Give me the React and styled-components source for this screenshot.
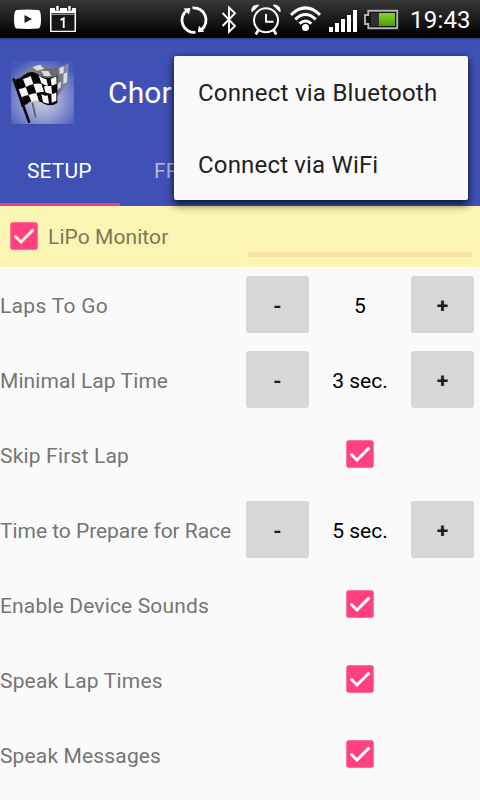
import * as React from "react"
import styled, { createGlobalStyle } from "styled-components"

const GlobalStyle = createGlobalStyle`
  body {
    margin: 0;
    background: #fafafa;
    font-family: Roboto, "Liberation Sans", sans-serif;
  }

  * {
    box-sizing: border-box;
  }
`

const Screen = styled.div`
  position: relative;
  width: 480px;
  height: 800px;
  overflow: hidden;
  background: #fafafa;
`

const StatusBar = styled.div`
  height: 38px;
  display: flex;
  justify-content: space-between;
  padding: 0 8px 0 13px;
  background: linear-gradient(#373735, #1b1b1a 50%, #000 92%);
`

const StatusGroup = styled.div`
  display: flex;

  svg {
    display: block;
    height: 38px;
  }
`

const Clock = styled.div`
  width: 62px;
  color: #fff;
  font-size: 24px;
  line-height: 40px;
  letter-spacing: 0.2px;
  white-space: nowrap;
`

const Header = styled.header`
  height: 168px;
  background: #3f51b5;
  box-shadow: inset 0 3px 3px -2px #303b86;
`

const Toolbar = styled.div`
  height: 109px;
  display: flex;
  align-items: center;
  padding-left: 11px;
  gap: 34px;

  svg {
    display: block;
  }
`

const Title = styled.h1`
  margin: 0;
  color: #fff;
  font-size: 30px;
  font-weight: 400;
  letter-spacing: 0.1px;
`

const Tabs = styled.nav`
  height: 59px;
  display: flex;
`

const Tab = styled.div`
  width: 120px;
  height: 59px;
  padding: 12px 0 0 ${(p) => p.$inset}px;
  line-height: 25px;
  font-size: 21px;
  letter-spacing: 0.1px;
  color: ${(p) => (p.$active ? "#fff" : "#b2b9e1")};
  border-bottom: 3px solid ${(p) => (p.$active ? "#ec407f" : "transparent")};
`

const MonitorBar = styled.div`
  height: 61px;
  display: flex;
  padding: 0 8px 0 10px;
  justify-content: space-between;
  background: #fbf4b3;
`

const MonitorLabel = styled.div`
  display: flex;
  align-items: center;
  gap: 10px;
  font-size: 21px;
  letter-spacing: 0.07px;
  color: #7b7854;

  svg {
    margin-bottom: 2px;
  }
`

const VoltageLine = styled.div`
  width: 224px;
  height: 5px;
  margin-top: 46px;
  background: #fae3ab;
`

const Row = styled.div`
  height: 75px;
  display: grid;
  grid-template-columns: 240px 240px;
  align-items: center;
`

const Label = styled.div`
  font-size: 21px;
  line-height: 25px;
  letter-spacing: ${(p) => p.$spacing}px;
  color: #757575;
  white-space: nowrap;
  padding-top: 3px;
`

const Stepper = styled.div`
  display: flex;
  align-items: center;
  justify-content: space-between;
  padding: 0 6px;
`

const StepButton = styled.button`
  width: 63px;
  height: 57px;
  padding: 3px 0 0;
  border: 0;
  border-radius: 3px;
  background: #d6d7d7;
  color: #1c1c1c;
  font: 700 21px Roboto, "Liberation Sans", sans-serif;
`

const Value = styled.div`
  padding-top: 2px;
  font-size: 21px;
  color: #000;
`

const CheckCell = styled.div`
  display: flex;
  justify-content: center;
  padding-bottom: 1px;
`

const CheckSvg = styled.svg`
  display: block;
  width: 28px;
  height: 28px;
`

const Menu = styled.div`
  position: absolute;
  left: 174px;
  top: 56px;
  width: 294px;
  height: 144px;
  border-radius: 2px;
  background: #fafafa;
  box-shadow: 0 5px 9px rgba(0, 0, 0, 0.6), 0 1px 6px rgba(0, 0, 0, 0.4);
`

const MenuItem = styled.div`
  height: 72px;
  padding: 1px 0 0 24px;
  line-height: 72px;
  font-size: 24px;
  letter-spacing: ${(p) => p.$spacing}px;
  color: #212121;
  white-space: nowrap;
`

const Check = ({ mark = "#fff" }) => (
  <CheckSvg viewBox="0 0 28 28">
    <rect x="0.3" y="0.3" width="27.4" height="27.4" rx="2.5" fill="#ff4081" />
    <path d="M4.7 13.8 L11 20 L23.4 7.6" fill="none" stroke={mark} strokeWidth="2.9" />
  </CheckSvg>
)

const FlagIcon = () => (
  <svg width="63" height="63" viewBox="18 15 189 189">
    <defs>
      <radialGradient id="glow" cx="0.5" cy="0.6" r="0.66">
        <stop offset="0" stopColor="#d4d5e6" />
        <stop offset="0.4" stopColor="#a1a7d2" />
        <stop offset="0.85" stopColor="#5f6dc0" />
        <stop offset="1" stopColor="#4657b7" />
      </radialGradient>
      <linearGradient id="back" x1="0" x2="1">
        <stop offset="0" stopColor="#85888f" />
        <stop offset="0.7" stopColor="#66686d" />
        <stop offset="1" stopColor="#8d92ad" />
      </linearGradient>
    </defs>
    <rect x="18" y="15" width="189" height="189" rx="3" fill="url(#glow)" />
    <path d="M82 140 L92 184" stroke="#5b5d6c" strokeWidth="5" />
    <path d="M55 50 Q82 24 108 28 C130 44 160 38 191 22 L187 80 Q173 108 150 124 L60 90Z" fill="url(#back)" />
    <path d="M82 33 L105 26 L118 38 L96 44Z M108 44 L130 45 L139 60 L118 60Z M163 36 L176 31 L176 50 L164 55Z M176 53 L187 49 L186 78 L175 84Z M157 84 L168 76 L167 94 L157 102Z" fill="#dcdde0" />
    <path d="M26 70 L72 197" stroke="#0c0c10" strokeWidth="8" strokeLinecap="round" />
    <path d="M28 72 Q46 68 57 57 Q75 43 92 51 C112 65 130 73 157 58 L157 141 Q140 153 118 144 C98 130 78 132 66 144 L50 154Z" fill="#08080a" />
    <path d="M54 69 Q66 66 77 60 L85 84 Q74 87 63 93Z M101 58 Q112 68 124 70 L129 90 Q119 88 109 81Z M137 69 L154 61 L155 83 L140 89Z M41 99 Q51 99 62 93 L71 117 Q60 118 50 124Z M85 84 Q97 82 109 83 L117 108 Q106 107 94 111Z M124 90 L139 90 L141 114 Q128 113 121 109 L117 91Z M71 117 Q83 112 94 111 L102 136 Q88 132 80 138Z M109 114 Q119 121 128 118 L132 142 Q122 143 114 138Z M139 115 L154 110 L154 134 L140 140Z" fill="#fbfbfb" />
  </svg>
)

const VideoIcon = () => (
  <svg width="37" viewBox="13 0 37 38">
    <path d="M16.5 10 Q27.5 9 38.5 10 Q41 10.5 41 19.2 Q41 28 38.5 28.6 Q27.5 29.5 16.5 28.6 Q14 28 14 19.2 Q14 10.5 16.5 10Z" fill="#fff" />
    <path d="M24.5 15 L32 19 L24.5 23Z" fill="#222" />
  </svg>
)

const CalendarIcon = () => (
  <svg width="27" viewBox="50 0 27 38">
    <path d="M50 8h26v24H50Z" fill="#fff" />
    <path d="M51.2 13.2h23.6v1.2H51.2Z M51.5 15h23v15.7h-23Z" fill="#161616" />
    <path d="M55 6h5v4.5h-5Z M67 6h5v4.5h-5Z" fill="#252525" />
    <path d="M56.2 6h2.5v4h-2.5Z M68.2 6h2.5v4h-2.5Z" fill="#fff" />
    <path d="M60.5 20 L63.7 18.4 V28" fill="none" stroke="#fff" strokeWidth="1.9" />
  </svg>
)

const SyncIcon = () => (
  <svg width="41" viewBox="179 0 41 38">
    <g fill="none" stroke="#fff" strokeWidth="2.8">
      <path d="M195.5 32.4 A12.3 12.3 0 0 1 186.5 10.6" />
      <path d="M192.5 7.9 A12.3 12.3 0 0 1 201.5 29.7" />
    </g>
    <path d="M183.6 8.6 L190.4 8 L189 14.6Z M204.4 31.7 L197.6 32.3 L199 25.7Z" fill="#fff" />
  </svg>
)

const BluetoothIcon = () => (
  <svg width="30" viewBox="220 0 30 38">
    <path d="M222.6 13 L235 26 L229 31.7 V7.5 L235 13.2 L222.6 26" fill="none" stroke="#fff" strokeWidth="1.9" />
  </svg>
)

const AlarmIcon = () => (
  <svg width="39" viewBox="250 0 39 38">
    <g fill="none" stroke="#fff">
      <circle cx="266" cy="20.2" r="12" strokeWidth="2" />
      <path d="M266 14 V21.8 H273.5" strokeWidth="1.9" />
      <path d="M258.3 30 L255.8 34.5 M273.7 30 L276.2 34.5" strokeWidth="2.6" />
    </g>
    <path d="M251.2 11.5 Q251 5 258.4 4.5 L259 5.6 L252.3 12.1Z M280.8 11.5 Q281 5 273.6 4.5 L273 5.6 L279.7 12.1Z" fill="#fff" />
  </svg>
)

const WifiIcon = () => (
  <svg width="40" viewBox="289 0 40 38">
    <g fill="none" stroke="#fff" strokeWidth="3">
      <path d="M291 14.8 Q305.5 1 320 14.8" />
      <path d="M295.3 19.3 Q305.5 9.8 315.7 19.3" />
      <path d="M299.6 23.6 Q305.5 18.5 311.4 23.6" />
    </g>
    <circle cx="305.5" cy="27.6" r="3.5" fill="#fff" />
  </svg>
)

const SignalIcon = () => (
  <svg width="35" viewBox="329 0 35 38">
    <path d="M329 27h4v5h-4Z M335 23h4v9h-4Z M341 19h4v13h-4Z M347 15h4v17h-4Z M353 10h4v22h-4Z" fill="#fff" />
  </svg>
)

const BatteryIcon = () => (
  <svg width="46" viewBox="364 0 46 38">
    <defs>
      <linearGradient id="charge" x1="0" x2="0" y1="0" y2="1">
        <stop offset="0" stopColor="#83d62b" />
        <stop offset="0.5" stopColor="#68bd14" />
        <stop offset="1" stopColor="#4a9c08" />
      </linearGradient>
    </defs>
    <path d="M368.3 10.8 H397.2 V28.2 H368.3 V24 H365 V15 H368.3Z" fill="#111" stroke="#b4b4b4" strokeWidth="1.9" />
    <path d="M371 13h8v13h-8Z" fill="#303030" />
    <path d="M379 13h16v13h-16Z" fill="url(#charge)" />
  </svg>
)

const settings = [
  { label: "Laps To Go", value: "5", spacing: 0.3 },
  { label: "Minimal Lap Time", value: "3 sec.", spacing: 0.08 },
  { label: "Skip First Lap", spacing: 0.18 },
  { label: "Time to Prepare for Race", value: "5 sec.", spacing: -0.04 },
  { label: "Enable Device Sounds", spacing: 0.15 },
  { label: "Speak Lap Times", spacing: 0.18 },
  { label: "Speak Messages", spacing: 0.15 },
]

const SettingRow = ({ label, value, spacing }) => (
  <Row>
    <Label $spacing={spacing}>{label}</Label>
    {value ? (
      <Stepper>
        <StepButton>-</StepButton>
        <Value>{value}</Value>
        <StepButton>+</StepButton>
      </Stepper>
    ) : (
      <CheckCell>
        <Check />
      </CheckCell>
    )}
  </Row>
)

export default function App() {
  return (
    <Screen>
      <GlobalStyle />
      <StatusBar>
        <StatusGroup>
          <VideoIcon />
          <CalendarIcon />
        </StatusGroup>
        <StatusGroup>
          <SyncIcon />
          <BluetoothIcon />
          <AlarmIcon />
          <WifiIcon />
          <SignalIcon />
          <BatteryIcon />
          <Clock>19:43</Clock>
        </StatusGroup>
      </StatusBar>
      <Header>
        <Toolbar>
          <FlagIcon />
          <Title>Chor</Title>
        </Toolbar>
        <Tabs>
          <Tab $active $inset={27}>SETUP</Tab>
          <Tab $inset={34}>FR</Tab>
        </Tabs>
      </Header>
      <MonitorBar>
        <MonitorLabel>
          <Check mark="#fbf0cf" />
          LiPo Monitor
        </MonitorLabel>
        <VoltageLine />
      </MonitorBar>
      {settings.map((s) => (
        <SettingRow key={s.label} {...s} />
      ))}
      <Menu>
        <MenuItem $spacing={0.25}>Connect via Bluetooth</MenuItem>
        <MenuItem $spacing={0.17}>Connect via WiFi</MenuItem>
      </Menu>
    </Screen>
  )
}
